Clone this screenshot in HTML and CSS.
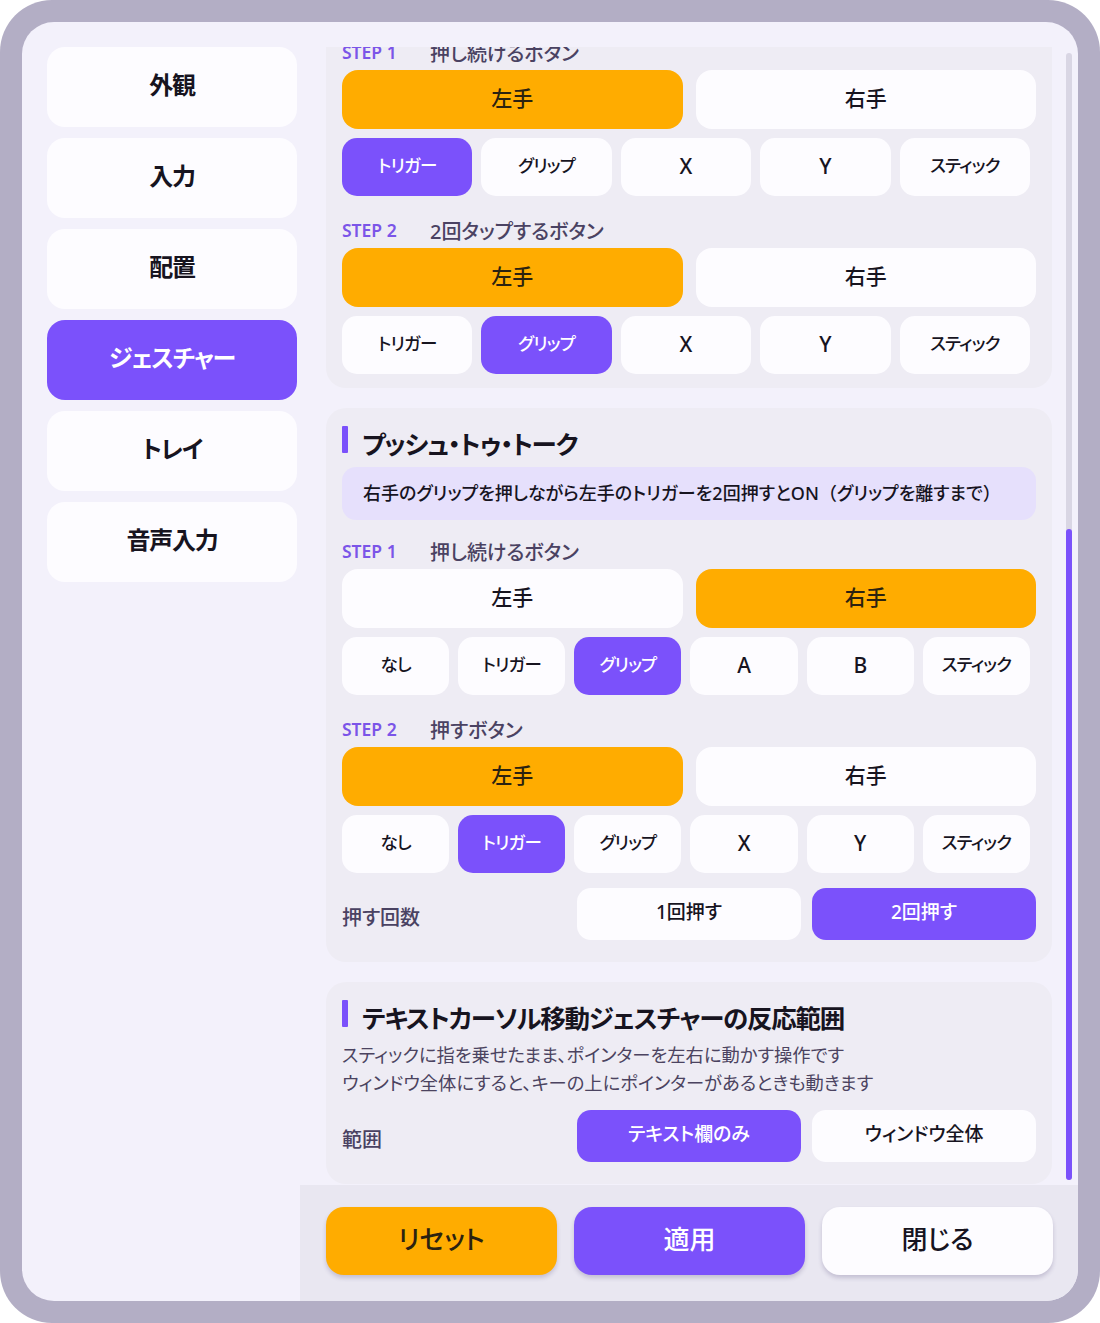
FILE: index.html
```html
<!DOCTYPE html>
<html lang="ja">
<head>
<meta charset="utf-8">
<title>ジェスチャー設定</title>
<link rel="stylesheet" href="styles.css">
</head>
<body>
<div class="frame">
  <div class="panel">
    <nav class="sidebar">
      <button class="nav-btn">外観</button>
      <button class="nav-btn">入力</button>
      <button class="nav-btn">配置</button>
      <button class="nav-btn active">ジェスチャー</button>
      <button class="nav-btn">トレイ</button>
      <button class="nav-btn">音声入力</button>
    </nav>
    <main class="main">
      <div class="scroll">
        <div class="scroll-content">
          <section class="card card-first">
            <div class="step"><span class="step-no">STEP 1</span><span class="step-title">押し続けるボタン</span></div>
            <div class="hands"><button class="btn hand orange">左手</button><button class="btn hand">右手</button></div>
            <div class="keys five"><button class="btn key purple">トリガー</button><button class="btn key">グリップ</button><button class="btn key latin">X</button><button class="btn key latin">Y</button><button class="btn key">スティック</button></div>
            <div class="step"><span class="step-no">STEP 2</span><span class="step-title">2回タップするボタン</span></div>
            <div class="hands"><button class="btn hand orange">左手</button><button class="btn hand">右手</button></div>
            <div class="keys five"><button class="btn key">トリガー</button><button class="btn key purple">グリップ</button><button class="btn key latin">X</button><button class="btn key latin">Y</button><button class="btn key">スティック</button></div>
          </section>

          <section class="card">
            <h2 class="card-title">プッシュ・トゥ・トーク</h2>
            <p class="info">右手のグリップを押しながら左手のトリガーを2回押すとON<span class="fw">（</span>グリップを離すまで<span class="fw">）</span></p>
            <div class="step"><span class="step-no">STEP 1</span><span class="step-title">押し続けるボタン</span></div>
            <div class="hands"><button class="btn hand">左手</button><button class="btn hand orange">右手</button></div>
            <div class="keys six"><button class="btn key">なし</button><button class="btn key">トリガー</button><button class="btn key purple">グリップ</button><button class="btn key latin">A</button><button class="btn key latin">B</button><button class="btn key">スティック</button></div>
            <div class="step"><span class="step-no">STEP 2</span><span class="step-title">押すボタン</span></div>
            <div class="hands"><button class="btn hand orange">左手</button><button class="btn hand">右手</button></div>
            <div class="keys six"><button class="btn key">なし</button><button class="btn key purple">トリガー</button><button class="btn key">グリップ</button><button class="btn key latin">X</button><button class="btn key latin">Y</button><button class="btn key">スティック</button></div>
            <div class="option-row count-row"><span class="option-label">押す回数</span><button class="btn opt">1回押す</button><button class="btn opt purple">2回押す</button></div>
          </section>

          <section class="card">
            <h2 class="card-title">テキストカーソル移動ジェスチャーの反応範囲</h2>
            <p class="desc">スティックに指を乗せたまま、ポインターを左右に動かす操作です<br>ウィンドウ全体にすると、キーの上にポインターがあるときも動きます</p>
            <div class="option-row range-row"><span class="option-label">範囲</span><button class="btn opt purple">テキスト欄のみ</button><button class="btn opt">ウィンドウ全体</button></div>
          </section>
        </div>
        <div class="scrollbar"><div class="thumb"></div></div>
      </div>
      <footer class="footer">
        <button class="fbtn orange">リセット</button>
        <button class="fbtn purple">適用</button>
        <button class="fbtn">閉じる</button>
      </footer>
    </main>
  </div>
</div>
</body>
</html>
```

FILE: styles.css
```css
* { box-sizing: border-box; }
html, body { margin: 0; padding: 0; background: #ffffff; }
body {
  font-family: "Noto Sans", "Noto Sans CJK JP", sans-serif;
  font-feature-settings: "palt";
  color: #17141f;
}
button {
  font-family: inherit;
  font-feature-settings: "palt";
  border: none;
  cursor: pointer;
  padding: 0 0 6px;
}

.frame {
  width: 1100px;
  height: 1323px;
  background: #b3aec5;
  border-radius: 52px;
  padding: 22px;
}
.panel {
  width: 100%;
  height: 100%;
  background: #f3f1fb;
  border-radius: 32px;
  overflow: hidden;
  display: flex;
}

/* sidebar */
.sidebar {
  width: 278px;
  flex: none;
  padding: 25px 0 0 25px;
  display: flex;
  flex-direction: column;
  gap: 11px;
}
.nav-btn {
  width: 250px;
  height: 80px;
  border-radius: 18px;
  background: #fdfcff;
  color: #17141f;
  font-size: 24px;
  font-weight: 700;
  letter-spacing: -1.2px;
  padding-bottom: 8px;
}
.nav-btn.active { background: #7b51fb; color: #ffffff; }

/* main */
.main {
  flex: 1;
  display: flex;
  flex-direction: column;
  min-width: 0;
}
.scroll {
  position: relative;
  margin-top: 25px;
  height: 1138px;
  overflow: hidden;
}
.scroll-content {
  padding: 0 26px;
  margin-top: -23px;
  display: flex;
  flex-direction: column;
  gap: 20px;
}
.scrollbar {
  position: absolute;
  right: 6px;
  top: 6px;
  bottom: 5px;
  width: 6px;
  border-radius: 3px;
  background: #d9d6e4;
}
.thumb {
  position: absolute;
  left: 0;
  right: 0;
  bottom: 0;
  height: 651px;
  border-radius: 3px;
  background: #7b51fb;
}

.card {
  background: #eeecf4;
  border-radius: 20px;
  padding: 16px 16px 22px;
}
.card-first { padding-bottom: 14px; }

.card-title {
  margin: 0;
  height: 36px;
  display: flex;
  align-items: center;
  gap: 13px;
  font-size: 25.5px;
  letter-spacing: -1.2px;
  font-weight: 700;
  color: #17141f;
}
.card-title::before {
  content: "";
  width: 6px;
  height: 27px;
  background: #7b51fb;
  border-radius: 1px;
  margin-top: -6px;
  margin-right: 1px;
}

.info {
  margin: 7px 0 0;
  height: 53px;
  padding: 0 21px 3px;
  display: flex;
  align-items: center;
  background: #e6e0fc;
  border-radius: 14px;
  font-size: 18px;
  font-weight: 500;
  color: #17141f;
}
.fw { font-feature-settings: normal; }

.desc {
  margin: 7px 0 0;
  font-size: 18.3px;
  line-height: 28px;
  color: #4b4360;
}

.step {
  display: flex;
  align-items: center;
  height: 24px;
  margin-top: 22px;
}
.card-first .step:first-child { margin-top: 0; }
.info + .step { margin-top: 19px; }
.step-no {
  width: 88px;
  font-size: 17.5px;
  font-weight: 600;
  color: #7b55e8;
}
.step-title {
  font-size: 20px;
  font-weight: 500;
  color: #4a4262;
}

.btn {
  background: #fdfcff;
  color: #17141f;
  font-weight: 500;
}
.orange { background: #ffac00; color: #2b2210; }
.purple { background: #7b51fb; color: #ffffff; }

.hands {
  display: grid;
  grid-template-columns: 1fr 1fr;
  gap: 13px;
  margin-top: 6px;
}
.hand {
  height: 59px;
  border-radius: 16px;
  font-size: 21px;
}

.keys {
  display: grid;
  gap: 9px;
  margin-top: 9px;
  padding-right: 6px;
}
.keys.five { grid-template-columns: repeat(5, 1fr); }
.keys.six { grid-template-columns: repeat(6, 1fr); }
.key {
  height: 58px;
  border-radius: 15px;
  font-size: 17.5px;
  letter-spacing: -0.8px;
}
.key.latin { font-size: 21px; letter-spacing: 0; padding-bottom: 2px; }

.option-row {
  display: grid;
  grid-template-columns: 1fr 1fr 1fr;
  column-gap: 11px;
  align-items: center;
}
.count-row { margin-top: 15px; }
.range-row { margin-top: 13px; }
.option-label {
  font-size: 20px;
  font-weight: 500;
  color: #4a4262;
  padding-top: 4px;
}
.opt {
  height: 52px;
  border-radius: 14px;
  font-size: 19px;
}

/* footer */
.footer {
  flex: 1;
  background: #e9e7f1;
  padding: 22px 25px 0 26px;
  display: grid;
  grid-template-columns: repeat(3, 1fr);
  gap: 17px;
  align-content: start;
}
.fbtn {
  height: 68px;
  border-radius: 18px;
  background: #fdfcff;
  color: #17141f;
  font-size: 26px;
  font-weight: 500;
  padding-bottom: 6px;
  box-shadow: 0 3px 4px rgba(70, 55, 110, 0.22);
}
.fbtn.orange { background: #ffac00; color: #2b2210; }
.fbtn.purple { background: #7b51fb; color: #ffffff; }
```
